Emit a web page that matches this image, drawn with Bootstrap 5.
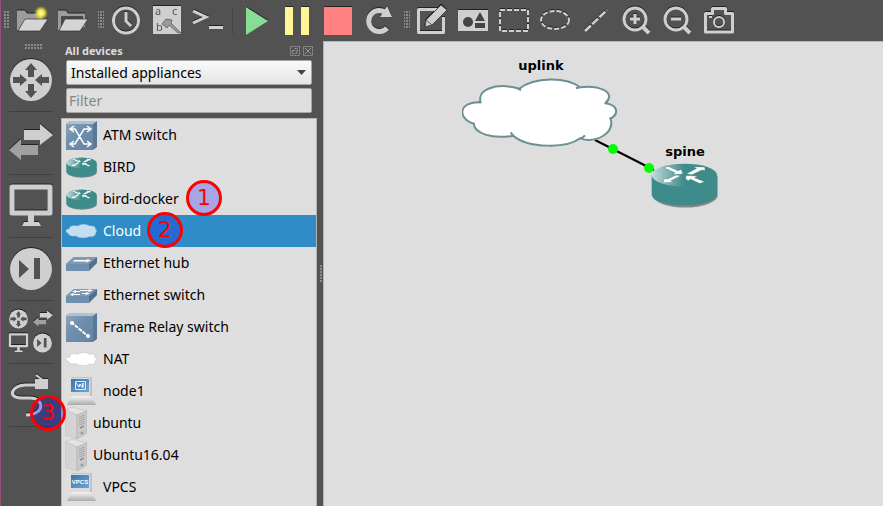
<!DOCTYPE html>
<html lang="en">
<head>
<meta charset="utf-8">
<meta name="viewport" content="width=device-width, initial-scale=1">
<title>Network topology</title>
<link href="https://cdn.jsdelivr.net/npm/bootstrap@5.3.0/dist/css/bootstrap.min.css" rel="stylesheet">
<style>
:root { --chrome:#525252; --panel:#dedede; --glyph:#cfcfcf; }
body { background:var(--chrome); font-family:"Noto Sans","Open Sans",sans-serif; font-size:14px; color:#000; }
.app { border-left:1px solid #9b4f78; }
.tool { border:0; padding:0; background:none; line-height:0; flex:none; }
.tool svg { color:var(--glyph); filter:drop-shadow(0 -1px 0 #222); }
.tool svg.flat { filter:none; }
.topbar { height:41px; }
.grip { width:12px; flex:none; }
.first-grip { width:11px; }
.rule { width:7px; flex:none; }
.rule::after { content:""; display:block; width:1px; height:26px; margin:0 auto; background:#454545; }
.sidebar { width:60px; flex:none; }
.side-rule { width:44px; height:1px; background:#404040; flex:none; }
.side-grip { height:8px; }
.dock { width:256px; flex:none; }
.dock-title { font-size:11px; line-height:18px; font-weight:700; color:#dcdcdc; padding:0 2px 0 4px; height:19px; }
.dock-form { padding:0 5px 5px; gap:3px; }
.dock-form .form-select, .dock-form .form-control { height:25px; padding:0 4px; font-size:14px; line-height:23px; border-radius:2px; border:1px solid #a6a6a6; box-shadow:none; color:#000; }
.dock-form .form-select { background:url("data:image/svg+xml,%3Csvg xmlns='http://www.w3.org/2000/svg' width='9' height='5'%3E%3Cpath d='M0 0h9L4.5 5z' fill='%23444'/%3E%3C/svg%3E") no-repeat right 5px center, linear-gradient(#fafafa,#e4e4e4); }
.dock-form .form-control { background:var(--panel); padding-left:2px; }
.dock-form .form-control::placeholder { color:#858585; opacity:1; }
.devices { background:var(--panel); border:1px solid #b4b4b4; border-bottom:0; border-radius:0; min-height:0; }
.devices .list-group-item { height:32px; flex:none; padding:0 4px; gap:6px; background:none; border:0; color:#000; line-height:34px; }
.devices .list-group-item.active { background:#308cc6; color:#fff; margin:0; }
.devices .tower { padding-left:3px; }
.splitter { width:6px; flex:none; }
.workspace { background:var(--panel); border:1px solid #b4b4b4; border-right:0; border-bottom:0; min-width:0; }
.node-label { font:700 13px "DejaVu Sans",sans-serif; text-anchor:middle; }
.callout { position:absolute; width:36px; height:36px; border:3px solid #f00; border-radius:50%; background:rgba(0,0,255,.25); color:#f00; font:22px/30px "DejaVu Sans",sans-serif; text-align:center; z-index:3; pointer-events:none; }
.callout-1 { left:124px; top:61px; }
.callout-2 { left:85px; top:93px; }
.callout-3 { left:29px; top:31px; }
</style>
<script src="https://cdn.jsdelivr.net/npm/bootstrap@5.3.0/dist/js/bootstrap.bundle.min.js"></script>
</head>
<body>
<svg width="0" height="0" class="position-absolute" aria-hidden="true">
  <defs>
    <linearGradient id="tealTop"><stop offset="0" stop-color="#c4dada"/><stop offset=".5" stop-color="#3d8b8b"/><stop offset="1" stop-color="#3d8b8b"/></linearGradient>
    <linearGradient id="steel" x1="0" y1="0" x2="1" y2="1"><stop offset="0" stop-color="#8ba3bb"/><stop offset=".4" stop-color="#6f8fae"/><stop offset="1" stop-color="#66849f"/></linearGradient>
    <linearGradient id="baseGrey" x1="0" x2="0" y1="0" y2="1"><stop offset="0" stop-color="#f6f6f6"/><stop offset="1" stop-color="#aaa"/></linearGradient>
    <linearGradient id="screenBlue" x1="0" y1="0" x2="1" y2="1"><stop offset="0" stop-color="#3873aa"/><stop offset="1" stop-color="#71a5cf"/></linearGradient>
    <radialGradient id="spark"><stop offset="0" stop-color="#fffde0"/><stop offset=".45" stop-color="#f3e83c"/><stop offset="1" stop-color="#e6dc20" stop-opacity="0"/></radialGradient>
    <pattern id="dots" width="3" height="3" patternUnits="userSpaceOnUse"><rect width="2" height="2" fill="#8c8c8c"/></pattern>
    <symbol id="router" viewBox="0 0 200 134">
      <path d="M5 38v58c0 20 43 37 97 37s97-17 97-37V38z" fill="#888"/>
      <path d="M2 36v56c0 20 43 35 98 35s97-15 97-35V36z" fill="#3d8b8b"/>
      <ellipse cx="99.500" cy="36" rx="97.500" ry="34" fill="url(#tealTop)"/>
      <path d="M38 14l14-4 28 13 10-4 5 14-31 1 8-5zM106 32l30-16-10-5 34 1 2 10-10-1-30 14zM89 38l-30 15 9 4-33 2 6-14 7 3 27-12zM103 47l2-10 34 2-9 5 30 12-14 5-28-13-7 5z" fill="#fff" stroke="#2d6868" stroke-width="1"/>
    </symbol>
    <symbol id="cloud" viewBox="68 82 468 208">
      <path d="M124 157C58 154 52 204 103 221C106 250 155 268 222 257C265 295 383 296 422 265C470 281 526 250 514 206C540 190 535 165 498 160C535 125 473 104 422 112C382 80 285 80 240 116C165 95 112 122 124 157Z" stroke-linejoin="round"/>
      <path d="M103 221l1-3M215 247q2 8 8 11M437 256q-6 7-15 10M516 202l-5 5M498 160l6-4M410 115l12-3M245 120l-10-4M124 157h-7" fill="none"/>
    </symbol>
    <symbol id="plate" viewBox="0 0 31 32"><path d="M0 5L4 2h27v26l-4 3H0z" fill="#587897"/><path d="M0 5l4-3h27l-4 3z" fill="#b2c1cf"/><path d="M0 5h27v26H0z" fill="url(#steel)"/></symbol>
    <symbol id="slab" viewBox="0 0 31 32"><path d="M0 17L8 10h23v6l-8 8H0z" fill="#52718f"/><path d="M0 17L8 10h23l-8 7z" fill="#8299b2"/><path d="M0 17h23v7H0z" fill="#6f8fae"/></symbol>
    <symbol id="laptop" viewBox="0 0 31 32"><path d="M4 4l2-2h20v19l-2 1H4z" fill="#c2c2c2"/><path d="M4 3h20v18H4z" fill="#dcdcdc"/><path d="M5 4h18v13H5z" fill="url(#screenBlue)"/><path d="M5 21h20l5 9H1z" fill="url(#baseGrey)"/></symbol>
    <symbol id="towerPc" viewBox="0 0 22 32"><path d="M0 3L7 0l15 4-10 4z" fill="#e2e2e2" stroke="#bbb" stroke-width=".5"/><path d="M0 3l12 5v24L0 28z" fill="#d4d4d4" stroke="#bbb" stroke-width=".5"/><path d="M12 8l10-4v22l-10 6z" fill="#c8c8c8" stroke="#aaa" stroke-width=".5"/><path d="M14 10l6-2M14 12l6-2M14 14l6-2M14 16l6-2M14 18l6-2" stroke="#aaa"/><path d="M15 21l4-2" stroke="#666"/><circle cx="17" cy="26" r="1.500" fill="#999"/></symbol>
  </defs>
</svg>

<div class="app vh-100 d-flex flex-column overflow-hidden position-relative">
  <nav class="topbar d-flex flex-nowrap align-items-center flex-shrink-0" aria-label="Main toolbar">
    <svg class="grip first-grip" height="41" viewBox="0 0 11 41"><path transform="translate(0 2)" d="M3 9h6v18H3z" fill="url(#dots)"/></svg>
    <button class="tool" aria-label="New project"><svg class="flat" width="41" height="40" viewBox="0 0 41 40"><path d="M5 29V9h8l2 3h15v14z" fill="#9c9ca0"/><path d="M5 9h8l2 3h14" stroke="#222" fill="none"/><path d="M6 30L13 18h23l-8 12z" fill="#d5d5d5" stroke="#333" stroke-width=".7"/><circle cx="29" cy="12" r="7" fill="url(#spark)"/></svg></button>
    <button class="tool" aria-label="Open project"><svg class="flat" width="41" height="40" viewBox="0 0 41 40"><path d="M5 29V9h8l2 3h17v14z" fill="#9c9ca0"/><path d="M5 9h8l2 3h17" stroke="#222" fill="none"/><path d="M8 28V15h22v5" fill="#4a4a4a"/><path d="M6 30l6-12h23l-8 12z" fill="#d5d5d5" stroke="#333" stroke-width=".7"/></svg></button>
    <svg class="grip" height="41" viewBox="0 0 12 41"><path transform="translate(0 2)" d="M4 9h6v18H4z" fill="url(#dots)"/></svg>
    <button class="tool" aria-label="Snapshots"><svg width="41" height="40" viewBox="0 0 41 40" fill="none" stroke="currentColor"><circle cx="20" cy="19.500" r="12.500" stroke-width="3"/><path d="M20 11v9l5 5" stroke-width="3"/></svg></button>
    <button class="tool" aria-label="Show interface labels"><svg width="41" height="40" viewBox="0 0 41 40"><path d="M6 5h28v28H6z" fill="currentColor"/><g font-family="Noto Sans" font-size="11" fill="#555"><text x="8" y="14">a</text><text x="25" y="14">c</text><text x="9" y="30">b</text></g><path d="M34 32L24 22l1-3-6-1-4 5 5 4 2-3 9 8h3z" fill="#999" stroke="#555" stroke-width=".7"/></svg></button>
    <button class="tool" aria-label="Console"><svg width="41" height="40" viewBox="0 0 41 40" fill="none" stroke="currentColor"><path d="M5 10l13 6-13 6" stroke-width="3"/><path d="M21 26.500h14" stroke-width="3"/></svg></button>
    <div class="rule"></div>
    <button class="tool" aria-label="Start all"><svg width="41" height="40" viewBox="0 0 41 40"><path d="M10 6l22 14-22 14z" fill="#88dc94"/></svg></button>
    <button class="tool" aria-label="Suspend all"><svg width="41" height="40" viewBox="0 0 41 40"><path d="M8 6h8v28H8zM24 6h8v28h-8z" fill="#fff596"/></svg></button>
    <button class="tool" aria-label="Stop all"><svg width="41" height="40" viewBox="0 0 41 40"><path d="M6 6h28v28H6z" fill="#ff8080"/></svg></button>
    <button class="tool" aria-label="Reload all"><svg width="41" height="40" viewBox="0 0 41 40"><path d="M27 12A10.500 10.500 0 1 0 28 27" fill="none" stroke="currentColor" stroke-width="5"/><path d="M28 5l5 11H21z" fill="currentColor"/></svg></button>
    <svg class="grip" height="41" viewBox="0 0 12 41"><path transform="translate(0 2)" d="M4 9h6v18H4z" fill="url(#dots)"/></svg>
    <button class="tool" aria-label="Add note"><svg width="41" height="40" viewBox="0 0 41 40"><path d="M26 8.500H6.500v23H31.500V16" fill="none" stroke="currentColor" stroke-width="3" stroke-linejoin="round"/><path d="M13 26l1-7L29 4l6 5-15 15z" fill="currentColor" stroke="#444"/><path d="M14 19l6 5" stroke="#555"/></svg></button>
    <button class="tool" aria-label="Insert picture"><svg width="41" height="40" viewBox="0 0 41 40"><path d="M5 9h30v21H5z" fill="currentColor"/><circle cx="15" cy="21" r="5" fill="#444"/><path d="M27 11l5 9H22zM22 22h10v5H22z" fill="#444"/></svg></button>
    <button class="tool" aria-label="Draw rectangle"><svg width="41" height="40" viewBox="0 0 41 40"><path d="M6 9h28v21H6z" fill="none" stroke="currentColor" stroke-width="2" stroke-dasharray="5 2"/></svg></button>
    <button class="tool" aria-label="Draw ellipse"><svg width="41" height="40" viewBox="0 0 41 40"><ellipse cx="20" cy="19" rx="14" ry="9" fill="none" stroke="currentColor" stroke-width="2" stroke-dasharray="5 2"/></svg></button>
    <button class="tool" aria-label="Draw line"><svg width="41" height="40" viewBox="0 0 41 40"><path d="M9 30L31 9" stroke="currentColor" stroke-width="2.500" stroke-dasharray="8 2"/></svg></button>
    <button class="tool" aria-label="Zoom in"><svg width="41" height="40" viewBox="0 0 41 40" fill="none" stroke="currentColor"><circle cx="18" cy="18" r="11" stroke-width="3"/><path d="M25 25l7 7" stroke-width="4"/><path d="M13 18h10M18 13v10" stroke-width="3"/></svg></button>
    <button class="tool" aria-label="Zoom out"><svg width="41" height="40" viewBox="0 0 41 40" fill="none" stroke="currentColor"><circle cx="18" cy="18" r="11" stroke-width="3"/><path d="M25 25l7 7" stroke-width="4"/><path d="M13 18h10" stroke-width="3"/></svg></button>
    <button class="tool" aria-label="Screenshot"><svg width="41" height="40" viewBox="0 0 41 40"><path d="M6.500 12.500h7v-5h13v5h7v18.500h-27z" fill="none" stroke="currentColor" stroke-width="3" stroke-linejoin="round"/><circle cx="20" cy="21" r="5" fill="none" stroke="currentColor" stroke-width="2"/><path d="M10 16h3" stroke="currentColor" stroke-width="2"/></svg></button>
  </nav>

  <div class="d-flex flex-fill overflow-hidden">
    <aside class="sidebar d-flex flex-column align-items-center" aria-label="Device types">
      <svg class="side-grip flex-shrink-0" width="60" height="8" viewBox="0 0 60 8"><path d="M24 3h17v5H24z" fill="url(#dots)"/></svg>
      <button class="tool" aria-label="Routers"><svg width="60" height="62" viewBox="0 0 60 62"><g id="ringArrows"><circle cx="30" cy="31" r="21" fill="currentColor"/><path d="M30 14l6 7h-3v7h-6v-7h-3zM30 49l6-7h-3v-7h-6v7h-3zM26 31l-7-6v3h-7v6h7v3zM34 31l7-6v3h7v6h-7v3z" fill="#525252"/></g></svg></button>
      <div class="side-rule"></div>
      <button class="tool" aria-label="Switches"><svg width="60" height="62" viewBox="0 0 60 62"><g id="swapArrows"><path d="M37 33H20v-6L8 38l12 10v-5h17z" fill="#a0a0a3"/><path d="M23 18h16v-6l13 11-13 10v-5H23z" fill="currentColor"/></g></svg></button>
      <div class="side-rule"></div>
      <button class="tool" aria-label="End devices"><svg width="60" height="62" viewBox="0 0 60 62"><g id="monitor"><path d="M11 12h38v26H11z" fill="none" stroke="currentColor" stroke-width="5" stroke-linejoin="round"/><path d="M27 40h6v7h5l2 4H21l2-4h4z" fill="currentColor"/></g></svg></button>
      <div class="side-rule"></div>
      <button class="tool" aria-label="Security devices"><svg width="60" height="62" viewBox="0 0 60 62"><g id="skipNode"><circle cx="30" cy="31" r="21" fill="currentColor"/><path d="M18 22l10 9-10 9zM33 20h6v21h-6z" fill="#525252"/></g></svg></button>
      <div class="side-rule"></div>
      <button class="tool" aria-label="All devices"><svg width="60" height="62" viewBox="0 0 60 62"><use href="#ringArrows" transform="translate(4 4) scale(.45)"/><use href="#swapArrows" transform="translate(28.500 4) scale(.45)"/><use href="#monitor" transform="translate(4 28) scale(.45)"/><use href="#skipNode" transform="translate(28 28) scale(.45)"/></svg></button>
      <div class="side-rule"></div>
      <div class="position-relative">
        <button class="tool" aria-label="Add a link"><svg width="60" height="62" viewBox="0 0 60 62"><path d="M35 21H25C10 21 6 34 20 34h9c15 0 15 17-4 17" fill="none" stroke="currentColor" stroke-width="3"/><path d="M34 15h13v10H34z" fill="currentColor"/><path d="M35 11l8 6" stroke="currentColor" stroke-width="2"/></svg></button>
        <span class="callout callout-3">3</span>
      </div>
      <div class="side-rule"></div>
    </aside>

    <section class="dock d-flex flex-column" aria-label="All devices">
      <div class="dock-title d-flex align-items-center">
        <span class="me-auto">All devices</span>
        <button class="tool" aria-label="Float panel"><svg class="flat" width="13" height="12" viewBox="0 0 13 12" fill="none" stroke="#999"><path d="M1.500 1.500h9v9h-9zM3.500 5.500h4v3h-4zM5.500 3.500h3v4" stroke-dasharray="2 1"/></svg></button>
        <button class="tool" aria-label="Close panel"><svg class="flat" width="13" height="12" viewBox="0 0 13 12" fill="none" stroke="#999"><path d="M1.500 1.500h9v9h-9z" stroke-dasharray="2 1"/><path d="M3 3l6 6M9 3l-6 6"/></svg></button>
      </div>
      <div class="dock-form d-flex flex-column">
        <select class="form-select" aria-label="Appliance source"><option>Installed appliances</option></select>
        <input class="form-control" type="text" placeholder="Filter" aria-label="Filter">
      </div>
      <div class="devices list-group flex-fill overflow-hidden position-relative">
        <button class="list-group-item d-flex align-items-center"><svg width="31" height="32"><use href="#plate"/><path d="M5 10h4l9 15h6M5 25h4l9-15h6M21 7l4 3-4 3M21 22l4 3-4 3M8 7l-4 3 4 3M8 22l-4 3 4 3" fill="none" stroke="#fff" stroke-width="1.500"/></svg>ATM switch</button>
        <button class="list-group-item d-flex align-items-center"><svg width="31" height="21"><use href="#router"/></svg>BIRD</button>
        <button class="list-group-item d-flex align-items-center"><svg width="31" height="21"><use href="#router"/></svg>bird-docker</button>
        <button class="list-group-item active d-flex align-items-center"><svg width="31" height="14" fill="#c3def0" stroke="#c3def0" stroke-width="6"><use href="#cloud"/></svg>Cloud</button>
        <button class="list-group-item d-flex align-items-center"><svg width="31" height="32"><use href="#slab"/><path d="M8 13h13v-1l4 1.500-5 2v-1H7z" fill="#fff"/></svg>Ethernet hub</button>
        <button class="list-group-item d-flex align-items-center"><svg width="31" height="32"><use href="#slab"/><path d="M14 11.500h9M9 12.500h5M16 14.500h7M6 15.500h8" stroke="#fff"/><path d="M23 10l4 1.500-5 1.500zM10 11l-4 1.500 4 1.500zM20 13l4 1.500-5 1.500zM8 14l-4 1.500 3 1.500z" fill="#fff"/></svg>Ethernet switch</button>
        <button class="list-group-item d-flex align-items-center"><svg width="31" height="32"><use href="#plate"/><path d="M5 11l18 15" stroke="#fff" stroke-width="2" stroke-dasharray="4 1"/><circle cx="6" cy="12" r="2" fill="#fff"/><circle cx="22" cy="25" r="2" fill="#fff"/></svg>Frame Relay switch</button>
        <button class="list-group-item d-flex align-items-center"><svg width="31" height="14" fill="#fff" stroke="#a3bbbb" stroke-width="6"><use href="#cloud"/></svg>NAT</button>
        <button class="list-group-item d-flex align-items-center"><svg width="31" height="32"><use href="#laptop"/><path d="M9.500 6.500h10v8h-10z" fill="none" stroke="#dbeaf6"/><path d="M10 8l3 4 1-3 2 3 1-4v5" fill="none" stroke="#fff"/></svg>node1</button>
        <button class="list-group-item tower d-flex align-items-center"><svg width="22" height="32"><use href="#towerPc"/></svg>ubuntu</button>
        <button class="list-group-item tower d-flex align-items-center"><svg width="22" height="32"><use href="#towerPc"/></svg>Ubuntu16.04</button>
        <button class="list-group-item d-flex align-items-center"><svg width="31" height="32"><use href="#laptop"/><text x="14" y="13" text-anchor="middle" font-family="Liberation Sans" font-weight="700" font-size="6" fill="#fff">VPCS</text></svg>VPCS</button>
        <span class="callout callout-1">1</span>
        <span class="callout callout-2">2</span>
      </div>
    </section>

    <svg class="splitter align-self-center" width="6" height="18" viewBox="0 0 6 18"><path d="M3 0h5v18H3z" fill="url(#dots)"/></svg>

    <main class="workspace flex-fill overflow-hidden">
      <svg width="559" height="464" viewBox="0 0 559 464" role="img" aria-label="Topology: uplink connected to spine">
        <path d="M271 98l59 30" stroke="#000" stroke-width="2"/>
        <svg x="138" y="35" width="156" height="70" fill="#fff" stroke="#6b9092" stroke-width="6"><use href="#cloud"/></svg>
        <svg x="327" y="121" width="67" height="45"><use href="#router"/></svg>
        <circle cx="289" cy="107" r="5" fill="#0f0"/><circle cx="325" cy="126" r="5" fill="#0f0"/>
        <text class="node-label" x="217" y="28">uplink</text>
        <text class="node-label" x="361" y="114">spine</text>
      </svg>
    </main>
  </div>
</div>
</body>
</html>
